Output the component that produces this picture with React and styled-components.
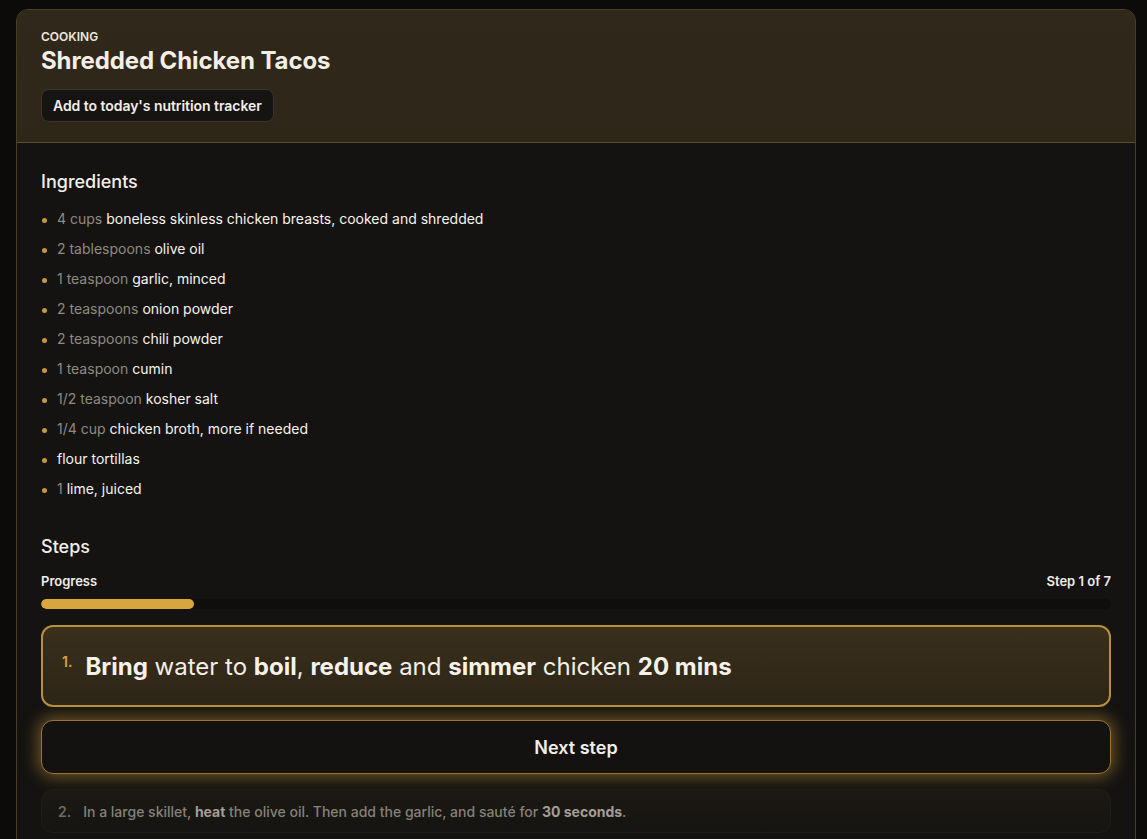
import React from 'react';
import styled, { createGlobalStyle } from 'styled-components';

const GlobalStyle = createGlobalStyle`
  html, body {
    margin: 0;
    background: #0c0b0a;
    font-family: Inter, "Noto Sans", sans-serif;
    color: #f2efe9;
  }
  * { box-sizing: border-box; }
`;

const ingredients = [
  { qty: '4 cups', name: 'boneless skinless chicken breasts, cooked and shredded' },
  { qty: '2 tablespoons', name: 'olive oil' },
  { qty: '1 teaspoon', name: 'garlic, minced' },
  { qty: '2 teaspoons', name: 'onion powder' },
  { qty: '2 teaspoons', name: 'chili powder' },
  { qty: '1 teaspoon', name: 'cumin' },
  { qty: '1/2 teaspoon', name: 'kosher salt' },
  { qty: '1/4 cup', name: 'chicken broth, more if needed' },
  { qty: '', name: 'flour tortillas' },
  { qty: '1', name: 'lime, juiced' },
];

export default function App() {
  const step = 1;
  const total = 7;
  return (
    <>
      <GlobalStyle />
      <Page>
        <Card>
          <Header>
            <Eyebrow>Cooking</Eyebrow>
            <Title>Shredded Chicken Tacos</Title>
            <TrackerButton>Add to today's nutrition tracker</TrackerButton>
          </Header>
          <Body>
            <Section>
              <SectionTitle>Ingredients</SectionTitle>
              <List>
                {ingredients.map((it, i) => (
                  <Item key={i}>
                    <Dot />
                    <span>
                      {it.qty && <Qty>{it.qty} </Qty>}
                      {it.name}
                    </span>
                  </Item>
                ))}
              </List>
            </Section>
            <Section>
              <SectionTitle>Steps</SectionTitle>
              <ProgressRow>
                <span>Progress</span>
                <span>Step {step} of {total}</span>
              </ProgressRow>
              <Track>
                <Fill style={{ width: `${(step / total) * 100}%` }} />
              </Track>
              <StepCard $active>
                <StepNum $active>1.</StepNum>
                <StepText $active>
                  <b>Bring</b> water to <b>boil</b>, <b>reduce</b> and <b>simmer</b> chicken <b>20 mins</b>
                </StepText>
              </StepCard>
              <NextButton>Next step</NextButton>
              <StepCard>
                <StepNum>2.</StepNum>
                <StepText>
                  In a large skillet, <b>heat</b> the olive oil. Then add the garlic, and sauté for <b>30 seconds</b>.
                </StepText>
              </StepCard>
            </Section>
          </Body>
        </Card>
      </Page>
    </>
  );
}

const Page = styled.div`
  padding: 9px 11px 0 16px;
  height: 839px;
  overflow: hidden;
`;

const Card = styled.div`
  border: 1px solid #4a3e24;
  border-radius: 12px;
  background: #141311;
  overflow: hidden;
  min-height: 900px;
`;

const Header = styled.div`
  background: linear-gradient(180deg, #30281a 0%, #2e2619 100%);
  border-bottom: 1px solid #5a4b2b;
  padding: 20px 24px 20px;
  display: flex;
  flex-direction: column;
  align-items: flex-start;
`;

const Eyebrow = styled.div`
  font-size: 12px;
  font-weight: 600;
  text-transform: uppercase;
  color: #ede8df;
  line-height: 14px;
`;

const Title = styled.h1`
  margin: 2px 0 0;
  font-size: 24px;
  font-weight: 700;
  letter-spacing: -0.1px;
  line-height: 30px;
  color: #f4efe6;
`;

const TrackerButton = styled.button`
  margin-top: 13px;
  background: #161411;
  color: #f2eee8;
  border: 1px solid #3a342a;
  border-radius: 8px;
  padding: 0 11px;
  height: 33px;
  font-family: inherit;
  font-size: 14px;
  font-weight: 600;
  letter-spacing: -0.05px;
`;

const Body = styled.div`
  padding: 28px 24px 0;
  display: flex;
  flex-direction: column;
  gap: 33px;
`;

const Section = styled.section`
  display: flex;
  flex-direction: column;
`;

const SectionTitle = styled.h2`
  margin: 0 0 10px;
  font-size: 18px;
  font-weight: 500;
  line-height: 22px;
  color: #f2efe9;
`;

const List = styled.ul`
  list-style: none;
  margin: 0;
  padding: 0;
`;

const Item = styled.li`
  display: flex;
  align-items: center;
  gap: 10px;
  height: 30px;
  font-size: 14px;
  font-weight: 400;
  color: #f7f4ee;
  padding-left: 1px;
`;

const Dot = styled.span`
  width: 5px;
  height: 5px;
  border-radius: 50%;
  background: #c8983d;
  margin-top: 4px;
  flex-shrink: 0;
`;

const Qty = styled.span`
  color: #8e8a82;
  font-weight: 400;
`;

const ProgressRow = styled.div`
  display: flex;
  justify-content: space-between;
  font-size: 13px;
  font-weight: 600;
  color: #f1ede6;
  margin-top: 5px;
  line-height: 16px;
`;

const Track = styled.div`
  margin-top: 10px;
  height: 10px;
  border-radius: 5px;
  background: #0f0e0c;
  overflow: hidden;
`;

const Fill = styled.div`
  height: 100%;
  border-radius: 5px;
  background: #d9a53f;
`;

const StepCard = styled.div`
  margin-top: ${({ $active }) => ($active ? '16px' : '15px')};
  display: flex;
  align-items: center;
  gap: ${({ $active }) => ($active ? '13px' : '12px')};
  padding: ${({ $active }) => ($active ? '0 19px' : '0 16px')};
  height: ${({ $active }) => ($active ? '82px' : '44px')};
  border-radius: 12px;
  border: ${({ $active }) => ($active ? '2px solid #b8903a' : '1px solid #1f1d19')};
  background: ${({ $active }) =>
    $active ? 'linear-gradient(180deg, #3a2f1b 0%, #2d2518 100%)' : 'linear-gradient(180deg, #1c1914 0%, #151412 100%)'};
`;

const StepNum = styled.span`
  font-size: 14px;
  font-weight: 600;
  color: ${({ $active }) => ($active ? '#d9a53f' : '#6f6b64')};
  align-self: ${({ $active }) => ($active ? 'flex-start' : 'center')};
  margin-top: ${({ $active }) => ($active ? '26px' : '0')};
`;

const StepText = styled.p`
  margin: 0;
  font-size: ${({ $active }) => ($active ? '24px' : '14px')};
  font-weight: ${({ $active }) => ($active ? 400 : 500)};
  color: ${({ $active }) => ($active ? '#f3efe7' : '#858178')};

  b {
    font-weight: 700;
    color: ${({ $active }) => ($active ? '#f6f2ea' : '#a39e95')};
  }
`;

const NextButton = styled.button`
  margin-top: 13px;
  height: 54px;
  border-radius: 12px;
  border: 1px solid #9a7630;
  background: #141210;
  color: #f2eee7;
  font-family: inherit;
  font-size: 18px;
  font-weight: 600;
  box-shadow: 0 0 16px 3px rgba(201, 150, 55, 0.5);
`;
